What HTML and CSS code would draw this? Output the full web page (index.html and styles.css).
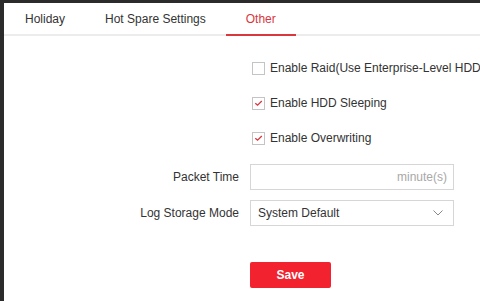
FILE: index.html
```html
<!DOCTYPE html>
<html lang="en">
<head>
    <meta charset="UTF-8">
    <meta name="viewport" content="width=device-width, initial-scale=1.0">
    <title>Other</title>
    <link rel="stylesheet" href="styles.css">
</head>
<body>
    <div id="panel">
        <div id="tabs">
            <div class="tab">Holiday</div>
            <div class="tab">Hot Spare Settings</div>
            <div class="tab active">Other</div>
        </div>
        <form id="settings" onsubmit="return false">
            <div class="row check_row">
                <span class="label"></span>
                <label class="check">
                    <span class="box"></span>
                    Enable Raid(Use Enterprise-Level HDD)
                </label>
            </div>
            <div class="row check_row">
                <span class="label"></span>
                <label class="check">
                    <span class="box checked">
                        <svg width="12" height="12" viewBox="0 0 12 12"><path d="M2.5 6.2 L5 8.4 L9.6 3.8" fill="none" stroke="#d9363e" stroke-width="1.4"/></svg>
                    </span>
                    Enable HDD Sleeping
                </label>
            </div>
            <div class="row check_row last_check">
                <span class="label"></span>
                <label class="check">
                    <span class="box checked">
                        <svg width="12" height="12" viewBox="0 0 12 12"><path d="M2.5 6.2 L5 8.4 L9.6 3.8" fill="none" stroke="#d9363e" stroke-width="1.4"/></svg>
                    </span>
                    Enable Overwriting
                </label>
            </div>
            <div class="row field_row">
                <span class="label">Packet Time</span>
                <div class="textbox">
                    <span class="unit">minute(s)</span>
                </div>
            </div>
            <div class="row field_row">
                <span class="label">Log Storage Mode</span>
                <div class="textbox select">
                    <span>System Default</span>
                    <svg width="12" height="8" viewBox="0 0 12 8"><path d="M1.5 1.5 L6 6 L10.5 1.5" fill="none" stroke="#888" stroke-width="1"/></svg>
                </div>
            </div>
            <div class="row save_row">
                <span class="label"></span>
                <button type="submit" class="save">Save</button>
            </div>
        </form>
    </div>
</body>
</html>
```

FILE: styles.css
```css
html,
body
{
    margin: 0;
    height: 100%;
}
body
{
    background-color: #2b2b2b;
    padding: 3px 0 0 4px;
    box-sizing: border-box;
    overflow: hidden;
    font-family: "Liberation Sans", Arial, sans-serif;
    font-size: 12px;
    color: #333333;
}
#panel
{
    background-color: #ffffff;
    height: 100%;
    overflow: hidden;
}
#tabs
{
    display: flex;
    height: 31px;
    padding-left: 1px;
    border-bottom: 2px solid #ececec;
}
.tab
{
    display: flex;
    align-items: center;
    padding: 0 20px;
    white-space: nowrap;
    color: #333333;
}
.tab.active
{
    color: #d9363e;
    border-bottom: 2px solid #d9363e;
    margin-bottom: -2px;
}
#settings
{
    padding-top: 19px;
}
.row
{
    display: flex;
    align-items: center;
    height: 26px;
    white-space: nowrap;
}
.label
{
    flex: 0 0 235px;
    text-align: right;
    margin-right: 11px;
}
.check_row
{
    margin-bottom: 9px;
}
.last_check
{
    margin-bottom: 13px;
}
.field_row
{
    margin-bottom: 10px;
}
.save_row
{
    margin-top: 36px;
}
.check
{
    display: flex;
    align-items: center;
    gap: 5px;
    margin-left: 2px;
}
.box
{
    width: 11px;
    height: 11px;
    border: 1px solid #c4c4c4;
    display: flex;
    align-items: center;
    justify-content: center;
}
.textbox
{
    width: 204px;
    height: 26px;
    box-sizing: border-box;
    border: 1px solid #d6d6d6;
    display: flex;
    align-items: center;
    justify-content: flex-end;
    padding: 0 6px;
}
.unit
{
    color: #a8a8a8;
}
.select
{
    justify-content: space-between;
    padding: 0 9px 0 7px;
}
.save
{
    width: 81px;
    height: 26px;
    border: none;
    border-radius: 2px;
    background-color: #f2232f;
    color: #ffffff;
    font-family: "Liberation Sans", Arial, sans-serif;
    font-weight: bold;
    font-size: 12px;
}
```
